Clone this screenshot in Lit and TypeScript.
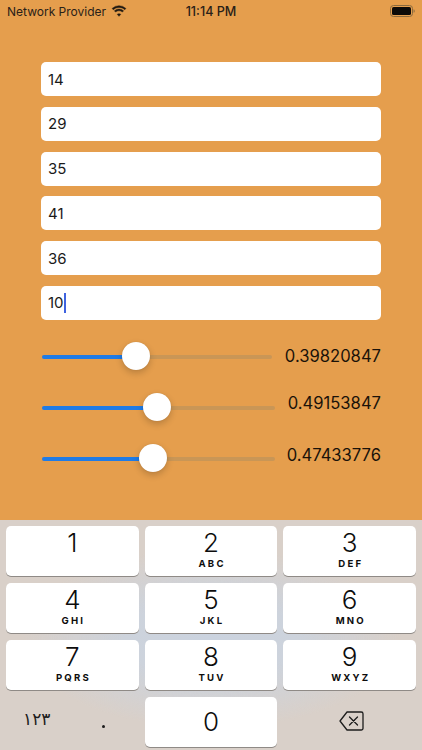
import { LitElement, html, css, svg } from "lit";
import { customElement } from "lit/decorators.js";

const FIELDS = ["14", "29", "35", "41", "36", "10"];
const SLIDERS = [
  { value: 0.39820847, label: "0.39820847", cls: "s1" },
  { value: 0.49153847, label: "0.49153847", cls: "s2" },
  { value: 0.47433776, label: "0.47433776", cls: "s3" },
];
const KEYS = [
  ["1", ""], ["2", "ABC"], ["3", "DEF"],
  ["4", "GHI"], ["5", "JKL"], ["6", "MNO"],
  ["7", "PQRS"], ["8", "TUV"], ["9", "WXYZ"],
];

@customElement("app-root")
export class AppRoot extends LitElement {
  static styles = css`
    :host {
      display: flex;
      flex-direction: column;
      width: 422px;
      height: 750px;
      overflow: hidden;
      background: #e59e4d;
      font-family: Inter, "Liberation Sans", sans-serif;
      color: #111;
    }
    .status {
      height: 22px;
      display: grid;
      grid-template-columns: 1fr auto 1fr;
      align-items: center;
      padding: 0 7px;
      font-size: 12px;
      color: #2a2118;
    }
    .status-left { display: flex; align-items: center; gap: 5px; }
    .status-right { display: flex; justify-content: flex-end; }
    .time { font-weight: 500; font-size: 12.6px; }
    .content {
      flex: 1;
      display: flex;
      flex-direction: column;
      padding: 40px 41px 0;
    }
    .fields { display: flex; flex-direction: column; gap: 10.8px; }
    .field {
      height: 34px;
      box-sizing: border-box;
      background: #fff;
      border-radius: 5px;
      padding: 0 7px;
      display: flex;
      align-items: center;
      font-size: 15px;
      color: #1a1a1a;
    }
    .caret {
      width: 2px;
      height: 20px;
      background: #3f63e0;
    }
    .sliders { display: flex; flex-direction: column; margin-top: 22px; gap: 23px; }
    .row { display: flex; align-items: center; height: 28px; }
    .slider { position: relative; height: 28px; flex: none; margin-left: 1px; }
    .track {
      position: absolute;
      left: 0;
      right: 0;
      top: 13px;
      height: 4px;
      border-radius: 2px;
      background: #c99656;
    }
    .fill {
      position: absolute;
      left: 0;
      top: 13px;
      height: 4px;
      border-radius: 2px;
      background: #1f7be6;
    }
    .thumb {
      position: absolute;
      top: 0;
      width: 28px;
      height: 28px;
      margin-left: -14px;
      border-radius: 50%;
      background: #fff;
      box-shadow: 0 3px 7px rgba(0, 0, 0, 0.2), 0 0 1px rgba(0, 0, 0, 0.15);
    }
    .s1 .slider { width: 230px; }
    .s2 .slider, .s3 .slider { width: 233px; }
    .value {
      margin-left: auto;
      font-size: 16.6px;
      color: #1a1209;
      white-space: nowrap;
    }
    .s2 .value { transform: translateY(-4px); }
    .s3 .value { transform: translateY(-3px); }
    .kbd {
      height: 230.5px;
      box-sizing: border-box;
      padding: 6.5px 6px 3px;
      display: grid;
      grid-template-columns: repeat(3, 1fr);
      grid-auto-rows: 50px;
      column-gap: 6px;
      row-gap: 7px;
      background:
        radial-gradient(ellipse 190px 90px at 211px 118px, #cbd3df 0%, #cdd3dc 45%, rgba(216, 207, 200, 0) 100%),
        #d9d0c9;
    }
    .key {
      background: #fff;
      border-radius: 5px;
      box-shadow: 0 1px 0 #8f8a86;
      display: flex;
      flex-direction: column;
      align-items: center;
      color: #0d0d0d;
    }
    .digit {
      font-size: 26px;
      line-height: 30px;
      margin-top: 2px;
      font-weight: 300;
    }
    .letters {
      font-size: 9.6px;
      line-height: 11px;
      font-weight: 700;
      letter-spacing: 2.2px;
      margin-right: -2.2px;
    }
    .zero .digit { margin-top: 10px; }
    .flat {
      display: flex;
      align-items: center;
      justify-content: center;
      color: #1c1c1c;
    }
    .backspace { padding-left: 3px; padding-bottom: 2px; }
    .split { padding: 0 12px 0 17px; justify-content: space-between; }
    .arabic {
      font-family: "DejaVu Sans", sans-serif;
      font-size: 17px;
      margin-bottom: 6px;
    }
    .dot {
      width: 3px;
      height: 3px;
      background: #1c1c1c;
      border-radius: 50%;
      margin: 8px 22px 0 0;
    }
  `;

  private wifi() {
    return svg`<svg width="16" height="12" viewBox="0 0 15 11" fill="#1d1710" stroke="#1d1710" stroke-width="0.4">
      <path d="M7.5 2.2c2.1 0 4 .8 5.4 2.1l1.1-1.2A9.6 9.6 0 0 0 7.5.5 9.6 9.6 0 0 0 1 3.1l1.1 1.2a7.9 7.9 0 0 1 5.4-2.1z"/>
      <path d="M7.5 5.3c1.2 0 2.3.5 3.2 1.2l1.1-1.2a6.4 6.4 0 0 0-8.6 0l1.1 1.2c.9-.7 2-1.2 3.2-1.2z"/>
      <path d="M7.5 8c-.7 0-1.2.2-1.7.6l1.7 1.9 1.7-1.9C8.7 8.2 8.2 8 7.5 8z"/>
    </svg>`;
  }

  private battery() {
    return svg`<svg width="25" height="12" viewBox="0 0 25 12">
      <rect x="0.5" y="0.5" width="22" height="11" rx="3" fill="none" stroke="#8a6a3e" stroke-width="1"/>
      <rect x="2" y="2" width="19" height="8" rx="1.6" fill="#0c0a08"/>
      <path d="M23.6 4.2c.7.2 1.1.9 1.1 1.8s-.4 1.6-1.1 1.8z" fill="#8a6a3e"/>
    </svg>`;
  }

  private backspace() {
    return svg`<svg width="25" height="20" viewBox="0 0 25 20" fill="none" stroke="#1c1c1c" stroke-width="1.3" stroke-linejoin="round" stroke-linecap="round">
      <path d="M8 1h14.2A1.8 1.8 0 0 1 24 2.8v14.4a1.8 1.8 0 0 1-1.8 1.8H8L1 10z"/>
      <path d="M10.5 6l8 8M18.5 6l-8 8"/>
    </svg>`;
  }

  render() {
    return html`
      <div class="status">
        <div class="status-left"><span>Network Provider</span>${this.wifi()}</div>
        <div class="time">11:14 PM</div>
        <div class="status-right">${this.battery()}</div>
      </div>
      <div class="content">
        <div class="fields">
          ${FIELDS.map(
            (f, i) => html`<div class="field">${f}${i === FIELDS.length - 1 ? html`<span class="caret"></span>` : ""}</div>`
          )}
        </div>
        <div class="sliders">
          ${SLIDERS.map(
            (s) => html`<div class="row ${s.cls}">
              <div class="slider">
                <div class="track"></div>
                <div class="fill" style="width: calc(14px + (100% - 28px) * ${s.value})"></div>
                <div class="thumb" style="left: calc(14px + (100% - 28px) * ${s.value})"></div>
              </div>
              <div class="value">${s.label}</div>
            </div>`
          )}
        </div>
      </div>
      <div class="kbd">
        ${KEYS.map(
          ([d, l]) => html`<div class="key"><span class="digit">${d}</span><span class="letters">${l}</span></div>`
        )}
        <div class="flat split"><span class="arabic">۱۲۳</span><span class="dot"></span></div>
        <div class="key zero"><span class="digit">0</span></div>
        <div class="flat backspace">${this.backspace()}</div>
      </div>
    `;
  }
}
